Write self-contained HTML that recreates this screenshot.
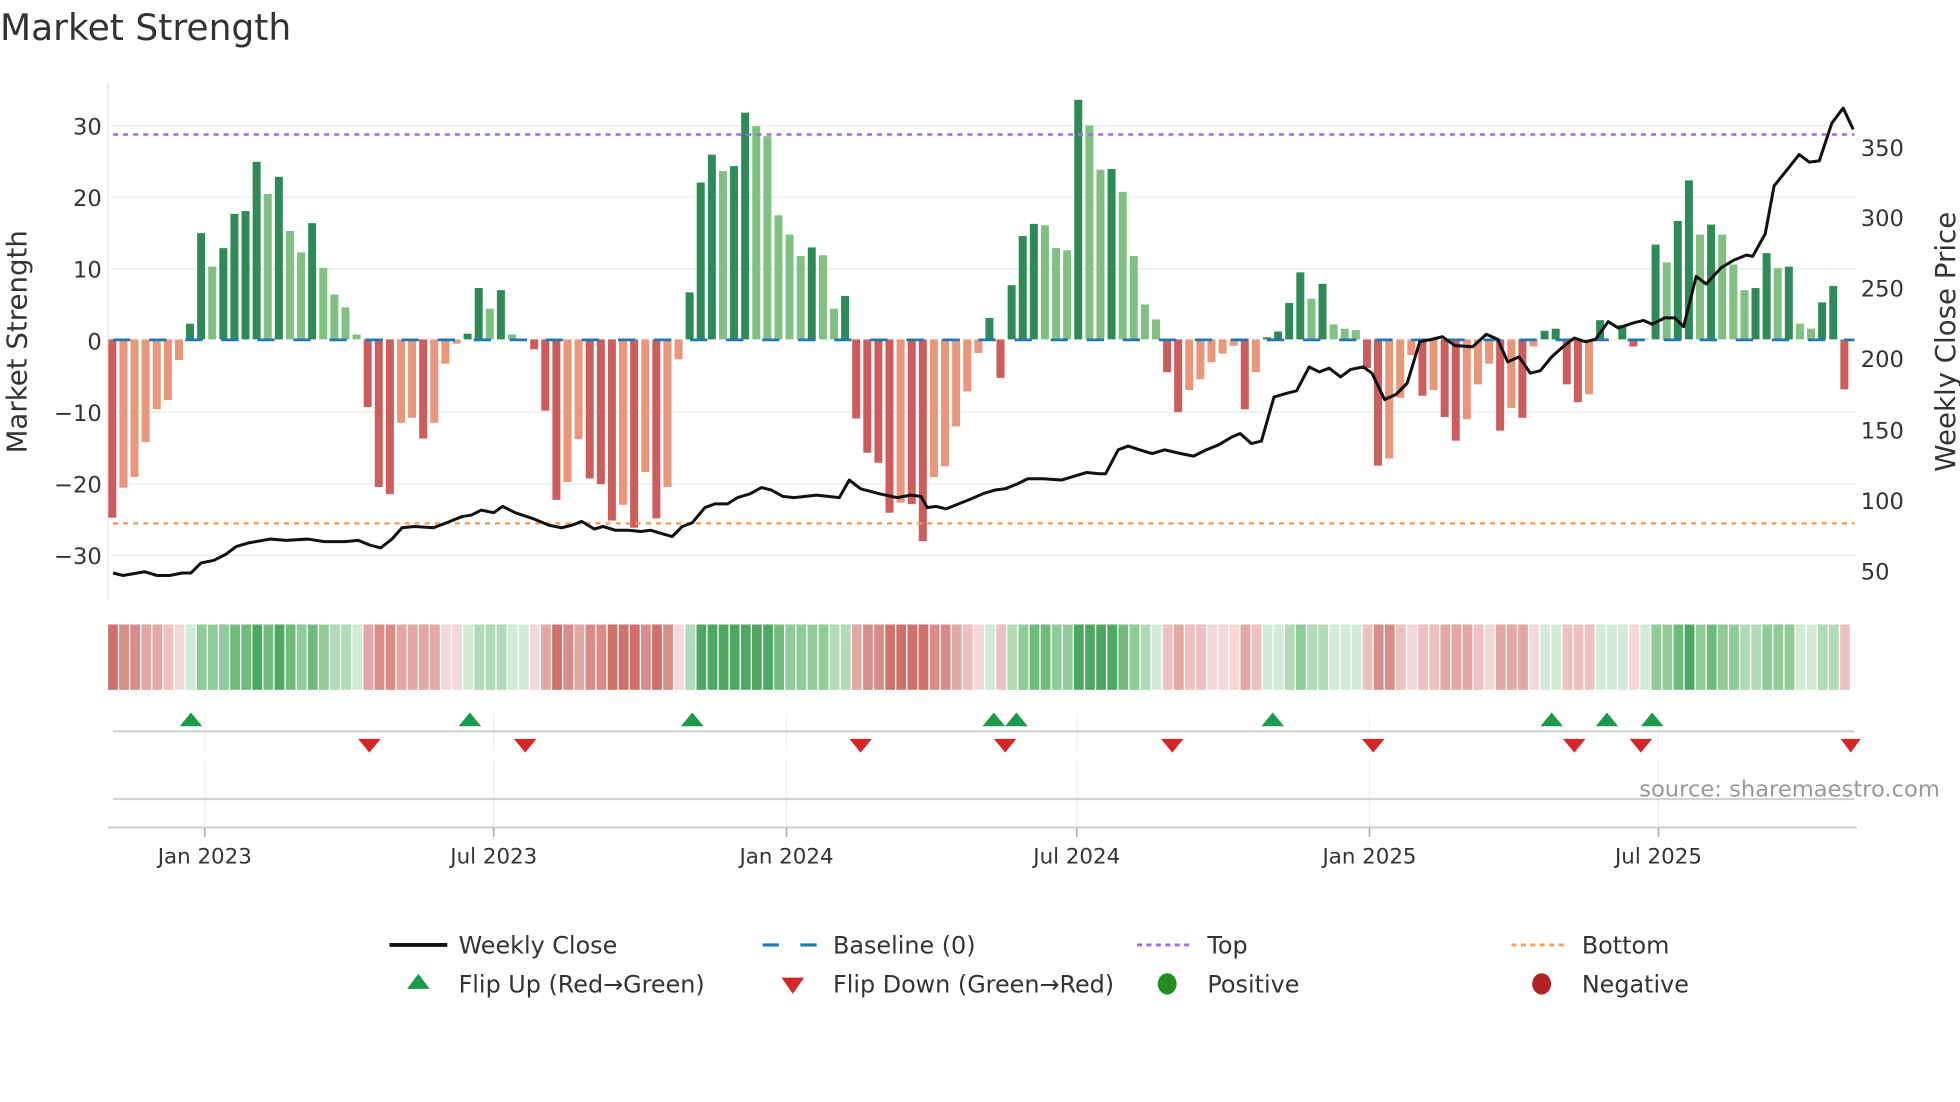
<!DOCTYPE html>
<html><head><meta charset="utf-8">
<style>
html,body{margin:0;padding:0;background:#fff;}
svg{display:block;font-family:"DejaVu Sans","Liberation Sans",sans-serif;}
#bars rect{width:.72px;}
#heat rect{width:.88px;height:52px;}
.p1{fill:#d2ebd5}.p2{fill:#b0dbb6}.p3{fill:#8ecb97}.p4{fill:#6ebb7b}.p5{fill:#4ea862}
.n1{fill:#f3d8d7}.n2{fill:#ecc1bf}.n3{fill:#e3a7a4}.n4{fill:#d98c88}.n5{fill:#cf716b}
</style></head>
<body>
<svg width="1960" height="1102" viewBox="0 0 1560 877" preserveAspectRatio="none" xmlns="http://www.w3.org/2000/svg">
<rect width="1560" height="877" fill="#fff"/>
<text x="0" y="32" font-size="28.7" fill="#333">Market Strength</text>

<!-- grid -->
<g stroke="#eceff3" stroke-width="1.3">
<line x1="88" x2="1478" y1="100" y2="100"/><line x1="88" x2="1478" y1="157" y2="157"/>
<line x1="88" x2="1478" y1="214" y2="214"/><line x1="88" x2="1478" y1="328" y2="328"/>
<line x1="88" x2="1478" y1="385" y2="385"/><line x1="88" x2="1478" y1="442" y2="442"/>
</g>
<line x1="86" x2="86" y1="65" y2="478" stroke="#e6e6e6" stroke-width="1"/>

<!-- left ticks -->
<g font-size="18" fill="#333" text-anchor="end">
<text x="81" y="107">30</text><text x="81" y="164">20</text><text x="81" y="221">10</text>
<text x="81" y="278">0</text><text x="81" y="335">−10</text><text x="81" y="392">−20</text><text x="81" y="449">−30</text>
</g>
<g font-size="18" fill="#333">
<text x="1481" y="124">350</text><text x="1481" y="180">300</text><text x="1481" y="236">250</text>
<text x="1481" y="292">200</text><text x="1481" y="349">150</text><text x="1481" y="405">100</text><text x="1481" y="461">50</text>
</g>
<text transform="translate(21,272) rotate(-90)" font-size="22" fill="#333" text-anchor="middle">Market Strength</text>
<text transform="translate(1556,272) rotate(-90)" font-size="22" fill="#333" text-anchor="middle">Weekly Close Price</text>

<!-- bars -->
<g id="bars" transform="translate(86.2 270.1) scale(8.837 -5.675)">
<g fill="#cd5c5c">
<rect x="0" y="-25" height="25"/><rect x="23" y="-9.5" height="9.5"/><rect x="24" y="-20.7" height="20.7"/><rect x="25" y="-21.7" height="21.7"/><rect x="28" y="-13.9" height="13.9"/><rect x="38" y="-1.4" height="1.4"/><rect x="39" y="-10" height="10"/><rect x="40" y="-22.5" height="22.5"/><rect x="43" y="-19.5" height="19.5"/><rect x="44" y="-20.3" height="20.3"/><rect x="45" y="-25.4" height="25.4"/><rect x="47" y="-26.4" height="26.4"/><rect x="49" y="-25.1" height="25.1"/><rect x="67" y="-11.1" height="11.1"/><rect x="68" y="-15.9" height="15.9"/><rect x="69" y="-17.3" height="17.3"/><rect x="70" y="-24.3" height="24.3"/><rect x="72" y="-23.1" height="23.1"/><rect x="73" y="-28.3" height="28.3"/><rect x="80" y="-5.4" height="5.4"/><rect x="95" y="-4.6" height="4.6"/><rect x="96" y="-10.2" height="10.2"/><rect x="102" y="-9.8" height="9.8"/><rect x="113" y="-4" height="4"/><rect x="114" y="-17.7" height="17.7"/><rect x="118" y="-7.9" height="7.9"/><rect x="120" y="-10.9" height="10.9"/><rect x="121" y="-14.2" height="14.2"/><rect x="125" y="-12.8" height="12.8"/><rect x="127" y="-11" height="11"/><rect x="131" y="-6.3" height="6.3"/><rect x="132" y="-8.8" height="8.8"/><rect x="137" y="-1" height="1"/><rect x="156" y="-7" height="7"/>
</g>
<g fill="#e9967a">
<rect x="1" y="-20.8" height="20.8"/><rect x="2" y="-19.3" height="19.3"/><rect x="3" y="-14.4" height="14.4"/><rect x="4" y="-9.8" height="9.8"/><rect x="5" y="-8.5" height="8.5"/><rect x="6" y="-2.9" height="2.9"/><rect x="26" y="-11.7" height="11.7"/><rect x="27" y="-11" height="11"/><rect x="29" y="-11.7" height="11.7"/><rect x="30" y="-3.4" height="3.4"/><rect x="31" y="-0.6" height="0.6"/><rect x="41" y="-20" height="20"/><rect x="42" y="-14" height="14"/><rect x="46" y="-23.2" height="23.2"/><rect x="48" y="-18.6" height="18.6"/><rect x="50" y="-20.7" height="20.7"/><rect x="51" y="-2.8" height="2.8"/><rect x="71" y="-22.9" height="22.9"/><rect x="74" y="-19.3" height="19.3"/><rect x="75" y="-17.8" height="17.8"/><rect x="76" y="-12.2" height="12.2"/><rect x="77" y="-7.3" height="7.3"/><rect x="78" y="-1.9" height="1.9"/><rect x="97" y="-7.1" height="7.1"/><rect x="98" y="-5.6" height="5.6"/><rect x="99" y="-3.2" height="3.2"/><rect x="100" y="-2" height="2"/><rect x="101" y="-0.9" height="0.9"/><rect x="103" y="-4.6" height="4.6"/><rect x="115" y="-16.7" height="16.7"/><rect x="116" y="-8.2" height="8.2"/><rect x="117" y="-2.2" height="2.2"/><rect x="119" y="-7.1" height="7.1"/><rect x="122" y="-11.2" height="11.2"/><rect x="123" y="-6.3" height="6.3"/><rect x="124" y="-3.4" height="3.4"/><rect x="126" y="-9.6" height="9.6"/><rect x="128" y="-1" height="1"/><rect x="133" y="-7.7" height="7.7"/>
</g>
<g fill="#2e8b57">
<rect x="7" y="0" height="2.2"/><rect x="8" y="0" height="14.9"/><rect x="10" y="0" height="12.8"/><rect x="11" y="0" height="17.6"/><rect x="12" y="0" height="18"/><rect x="13" y="0" height="24.9"/><rect x="15" y="0" height="22.8"/><rect x="18" y="0" height="16.3"/><rect x="32" y="0" height="0.8"/><rect x="33" y="0" height="7.2"/><rect x="35" y="0" height="6.9"/><rect x="52" y="0" height="6.6"/><rect x="53" y="0" height="22"/><rect x="54" y="0" height="25.9"/><rect x="56" y="0" height="24.3"/><rect x="57" y="0" height="31.8"/><rect x="63" y="0" height="12.9"/><rect x="66" y="0" height="6.1"/><rect x="79" y="0" height="3"/><rect x="81" y="0" height="7.6"/><rect x="82" y="0" height="14.5"/><rect x="83" y="0" height="16.2"/><rect x="87" y="0" height="33.6"/><rect x="90" y="0" height="23.9"/><rect x="104" y="0" height="0.3"/><rect x="105" y="0" height="1.1"/><rect x="106" y="0" height="5.1"/><rect x="107" y="0" height="9.4"/><rect x="109" y="0" height="7.8"/><rect x="129" y="0" height="1.2"/><rect x="130" y="0" height="1.5"/><rect x="134" y="0" height="2.7"/><rect x="136" y="0" height="2"/><rect x="139" y="0" height="13.3"/><rect x="141" y="0" height="16.6"/><rect x="142" y="0" height="22.3"/><rect x="144" y="0" height="16.1"/><rect x="148" y="0" height="7.2"/><rect x="149" y="0" height="12.1"/><rect x="151" y="0" height="10.2"/><rect x="154" y="0" height="5.2"/><rect x="155" y="0" height="7.5"/>
</g>
<g fill="#80c080">
<rect x="9" y="0" height="10.2"/><rect x="14" y="0" height="20.4"/><rect x="16" y="0" height="15.2"/><rect x="17" y="0" height="12.2"/><rect x="19" y="0" height="10"/><rect x="20" y="0" height="6.3"/><rect x="21" y="0" height="4.5"/><rect x="22" y="0" height="0.7"/><rect x="34" y="0" height="4.3"/><rect x="36" y="0" height="0.7"/><rect x="55" y="0" height="23.6"/><rect x="58" y="0" height="29.9"/><rect x="59" y="0" height="28.5"/><rect x="60" y="0" height="17.4"/><rect x="61" y="0" height="14.7"/><rect x="62" y="0" height="11.7"/><rect x="64" y="0" height="11.8"/><rect x="65" y="0" height="4.3"/><rect x="84" y="0" height="16"/><rect x="85" y="0" height="12.8"/><rect x="86" y="0" height="12.5"/><rect x="88" y="0" height="30"/><rect x="89" y="0" height="23.8"/><rect x="91" y="0" height="20.7"/><rect x="92" y="0" height="11.7"/><rect x="93" y="0" height="4.9"/><rect x="94" y="0" height="2.8"/><rect x="108" y="0" height="5.7"/><rect x="110" y="0" height="2.1"/><rect x="111" y="0" height="1.5"/><rect x="112" y="0" height="1.3"/><rect x="138" y="0" height="0.1"/><rect x="140" y="0" height="10.8"/><rect x="143" y="0" height="14.7"/><rect x="145" y="0" height="14.7"/><rect x="146" y="0" height="10.5"/><rect x="147" y="0" height="6.9"/><rect x="150" y="0" height="10"/><rect x="152" y="0" height="2.2"/><rect x="153" y="0" height="1.5"/>
</g>
</g>

<!-- reference lines -->
<line x1="90" x2="1476" y1="270.5" y2="270.5" stroke="#1f77b4" stroke-width="2.2" stroke-dasharray="13.8 14.9"/>
<line x1="90" x2="1476" y1="107" y2="107" stroke="#9b6ee0" stroke-width="2" stroke-dasharray="4 4"/>
<line x1="90" x2="1476" y1="416.5" y2="416.5" stroke="#f0a060" stroke-width="2" stroke-dasharray="4 4"/>

<!-- price line -->
<polyline fill="none" stroke="#111" stroke-width="2.4" stroke-linejoin="round" points="90,456 98,458 115,455 125,458 135,458 145,456 152,456 160,448 170,446 180,441 188,435 198,432 215,429 228,430 245,429 258,431 275,431 285,430 295,434 303,436 312,429 320,420 330,419 345,420 358,415 368,411 375,410 383,406 393,408 400,403 410,408 425,413 437,418 447,420 455,418 463,415 473,421 480,419 490,422 500,422 510,423 518,422 528,425 535,427 543,419 551,416 561,404 569,401 579,401 587,396 597,393 606,388 614,390 623,395 632,396 650,394 668,396 676,382 685,389 700,393 714,396 725,394 733,395 738,404 745,403 753,405 763,401 773,397 782,393 792,390 800,389 810,385 818,381 830,381 845,382 855,379 865,376 875,377 880,377 890,358 898,355 907,358 917,361 927,358 940,361 950,363 960,358 970,354 980,348 987,345 996,353 1004,351 1014,316 1024,313 1032,311 1042,292 1050,296 1058,293 1067,300 1075,294 1085,292 1092,297 1102,318 1111,314 1120,305 1130,272 1140,270 1148,268 1158,275 1172,276 1183,266 1192,270 1200,288 1209,284 1218,297 1226,295 1235,284 1244,276 1253,269 1262,272 1270,270 1280,256 1288,261 1300,257 1308,255 1315,258 1325,253 1333,253 1340,260 1350,220 1358,226 1370,213 1380,207 1390,203 1395,204 1405,186 1412,148 1420,138 1432,123 1440,129 1448,128 1458,98 1467,86 1475,103"/>

<!-- heat strip -->
<g id="heat" transform="translate(86 497) scale(8.837 1)">
<rect x="0" class="n5"/><rect x="1" class="n4"/><rect x="2" class="n4"/><rect x="3" class="n3"/><rect x="4" class="n3"/><rect x="5" class="n2"/><rect x="6" class="n1"/><rect x="7" class="p1"/><rect x="8" class="p3"/><rect x="9" class="p3"/><rect x="10" class="p3"/><rect x="11" class="p4"/><rect x="12" class="p4"/><rect x="13" class="p5"/><rect x="14" class="p4"/><rect x="15" class="p5"/><rect x="16" class="p4"/><rect x="17" class="p3"/><rect x="18" class="p4"/><rect x="19" class="p3"/><rect x="20" class="p2"/><rect x="21" class="p2"/><rect x="22" class="p1"/><rect x="23" class="n3"/><rect x="24" class="n4"/><rect x="25" class="n4"/><rect x="26" class="n3"/><rect x="27" class="n3"/><rect x="28" class="n3"/><rect x="29" class="n3"/><rect x="30" class="n1"/><rect x="31" class="n1"/><rect x="32" class="p1"/><rect x="33" class="p2"/><rect x="34" class="p2"/><rect x="35" class="p2"/><rect x="36" class="p1"/><rect x="37" class="p1"/><rect x="38" class="n1"/><rect x="39" class="n3"/><rect x="40" class="n5"/><rect x="41" class="n4"/><rect x="42" class="n3"/><rect x="43" class="n4"/><rect x="44" class="n4"/><rect x="45" class="n5"/><rect x="46" class="n5"/><rect x="47" class="n5"/><rect x="48" class="n4"/><rect x="49" class="n5"/><rect x="50" class="n4"/><rect x="51" class="n1"/><rect x="52" class="p2"/><rect x="53" class="p5"/><rect x="54" class="p5"/><rect x="55" class="p5"/><rect x="56" class="p5"/><rect x="57" class="p5"/><rect x="58" class="p5"/><rect x="59" class="p5"/><rect x="60" class="p4"/><rect x="61" class="p3"/><rect x="62" class="p3"/><rect x="63" class="p3"/><rect x="64" class="p3"/><rect x="65" class="p2"/><rect x="66" class="p2"/><rect x="67" class="n3"/><rect x="68" class="n4"/><rect x="69" class="n4"/><rect x="70" class="n5"/><rect x="71" class="n5"/><rect x="72" class="n5"/><rect x="73" class="n5"/><rect x="74" class="n4"/><rect x="75" class="n4"/><rect x="76" class="n3"/><rect x="77" class="n2"/><rect x="78" class="n1"/><rect x="79" class="p1"/><rect x="80" class="n2"/><rect x="81" class="p2"/><rect x="82" class="p3"/><rect x="83" class="p4"/><rect x="84" class="p4"/><rect x="85" class="p3"/><rect x="86" class="p3"/><rect x="87" class="p5"/><rect x="88" class="p5"/><rect x="89" class="p5"/><rect x="90" class="p5"/><rect x="91" class="p4"/><rect x="92" class="p3"/><rect x="93" class="p2"/><rect x="94" class="p1"/><rect x="95" class="n2"/><rect x="96" class="n3"/><rect x="97" class="n2"/><rect x="98" class="n2"/><rect x="99" class="n1"/><rect x="100" class="n1"/><rect x="101" class="n1"/><rect x="102" class="n3"/><rect x="103" class="n2"/><rect x="104" class="p1"/><rect x="105" class="p1"/><rect x="106" class="p2"/><rect x="107" class="p3"/><rect x="108" class="p2"/><rect x="109" class="p2"/><rect x="110" class="p1"/><rect x="111" class="p1"/><rect x="112" class="p1"/><rect x="113" class="n2"/><rect x="114" class="n4"/><rect x="115" class="n4"/><rect x="116" class="n2"/><rect x="117" class="n1"/><rect x="118" class="n2"/><rect x="119" class="n2"/><rect x="120" class="n3"/><rect x="121" class="n3"/><rect x="122" class="n3"/><rect x="123" class="n2"/><rect x="124" class="n1"/><rect x="125" class="n3"/><rect x="126" class="n3"/><rect x="127" class="n3"/><rect x="128" class="n1"/><rect x="129" class="p1"/><rect x="130" class="p1"/><rect x="131" class="n2"/><rect x="132" class="n2"/><rect x="133" class="n2"/><rect x="134" class="p1"/><rect x="135" class="p1"/><rect x="136" class="p1"/><rect x="137" class="n1"/><rect x="138" class="p1"/><rect x="139" class="p3"/><rect x="140" class="p3"/><rect x="141" class="p4"/><rect x="142" class="p5"/><rect x="143" class="p3"/><rect x="144" class="p4"/><rect x="145" class="p3"/><rect x="146" class="p3"/><rect x="147" class="p2"/><rect x="148" class="p2"/><rect x="149" class="p3"/><rect x="150" class="p3"/><rect x="151" class="p3"/><rect x="152" class="p1"/><rect x="153" class="p1"/><rect x="154" class="p2"/><rect x="155" class="p2"/><rect x="156" class="n2"/>
</g>

<!-- marker panel -->
<g stroke="#eceff3" stroke-width="1">
<line x1="163" x2="163" y1="568" y2="598"/><line x1="393" x2="393" y1="568" y2="598"/><line x1="626" x2="626" y1="568" y2="598"/><line x1="857" x2="857" y1="568" y2="598"/><line x1="1090" x2="1090" y1="568" y2="598"/><line x1="1320" x2="1320" y1="568" y2="598"/>
<line x1="163" x2="163" y1="605" y2="658"/><line x1="393" x2="393" y1="605" y2="658"/><line x1="626" x2="626" y1="605" y2="658"/><line x1="857" x2="857" y1="605" y2="658"/><line x1="1090" x2="1090" y1="605" y2="658"/><line x1="1320" x2="1320" y1="605" y2="658"/>
</g>
<line x1="90" x2="1476" y1="582" y2="582" stroke="#d0d0d0" stroke-width="1.6"/>
<line x1="90" x2="1476" y1="636" y2="636" stroke="#d0d0d0" stroke-width="1.6"/>
<line x1="86" x2="1478" y1="658.5" y2="658.5" stroke="#d0d0d0" stroke-width="1.6"/>
<g stroke="#aaa" stroke-width="1.2">
<line x1="163" x2="163" y1="659" y2="666"/><line x1="393" x2="393" y1="659" y2="666"/><line x1="626" x2="626" y1="659" y2="666"/><line x1="857" x2="857" y1="659" y2="666"/><line x1="1090" x2="1090" y1="659" y2="666"/><line x1="1320" x2="1320" y1="659" y2="666"/>
</g>
<g fill="#1a9a4a">
<path d="M143,578 L152,567 L161,578Z"/><path d="M365,578 L374,567 L383,578Z"/><path d="M542,578 L551,567 L560,578Z"/><path d="M782,578 L791,567 L800,578Z"/><path d="M800,578 L809,567 L818,578Z"/><path d="M1004,578 L1013,567 L1022,578Z"/><path d="M1226,578 L1235,567 L1244,578Z"/><path d="M1270,578 L1279,567 L1288,578Z"/><path d="M1306,578 L1315,567 L1324,578Z"/>
</g>
<g fill="#d62728">
<path d="M285,588 L303,588 L294,599Z"/><path d="M409,588 L427,588 L418,599Z"/><path d="M676,588 L694,588 L685,599Z"/><path d="M791,588 L809,588 L800,599Z"/><path d="M924,588 L942,588 L933,599Z"/><path d="M1084,588 L1102,588 L1093,599Z"/><path d="M1244,588 L1262,588 L1253,599Z"/><path d="M1297,588 L1315,588 L1306,599Z"/><path d="M1465,588 L1481,588 L1473,599Z"/>
</g>
<text x="1544" y="634" font-size="18" fill="#999" text-anchor="end">source: sharemaestro.com</text>

<g font-size="17" fill="#333" text-anchor="middle">
<text x="163" y="687">Jan 2023</text><text x="393" y="687">Jul 2023</text><text x="626" y="687">Jan 2024</text>
<text x="857" y="687">Jul 2024</text><text x="1090" y="687">Jan 2025</text><text x="1320" y="687">Jul 2025</text>
</g>

<!-- legend -->
<g font-size="19" fill="#333">
<line x1="310" x2="356" y1="752" y2="752" stroke="#111" stroke-width="3"/>
<text x="365" y="759">Weekly Close</text>
<line x1="607" x2="651" y1="752" y2="752" stroke="#1f77b4" stroke-width="2.4" stroke-dasharray="13 17"/>
<text x="663" y="759">Baseline (0)</text>
<line x1="905" x2="949" y1="752" y2="752" stroke="#9b6ee0" stroke-width="2.2" stroke-dasharray="4 3.5"/>
<text x="961" y="759">Top</text>
<line x1="1203" x2="1247" y1="752" y2="752" stroke="#f0a060" stroke-width="2.2" stroke-dasharray="4 3.5"/>
<text x="1259" y="759">Bottom</text>
<path d="M324,787 L333,775 L342,787Z" fill="#1a9a4a"/>
<text x="365" y="790">Flip Up (Red→Green)</text>
<path d="M622,778 L640,778 L631,791Z" fill="#d62728"/>
<text x="663" y="790">Flip Down (Green→Red)</text>
<ellipse cx="929" cy="783" rx="7.5" ry="8.5" fill="#228b22"/>
<text x="961" y="790">Positive</text>
<ellipse cx="1227" cy="783" rx="7.5" ry="8.5" fill="#b22222"/>
<text x="1259" y="790">Negative</text>
</g>
</svg>
</body></html>
